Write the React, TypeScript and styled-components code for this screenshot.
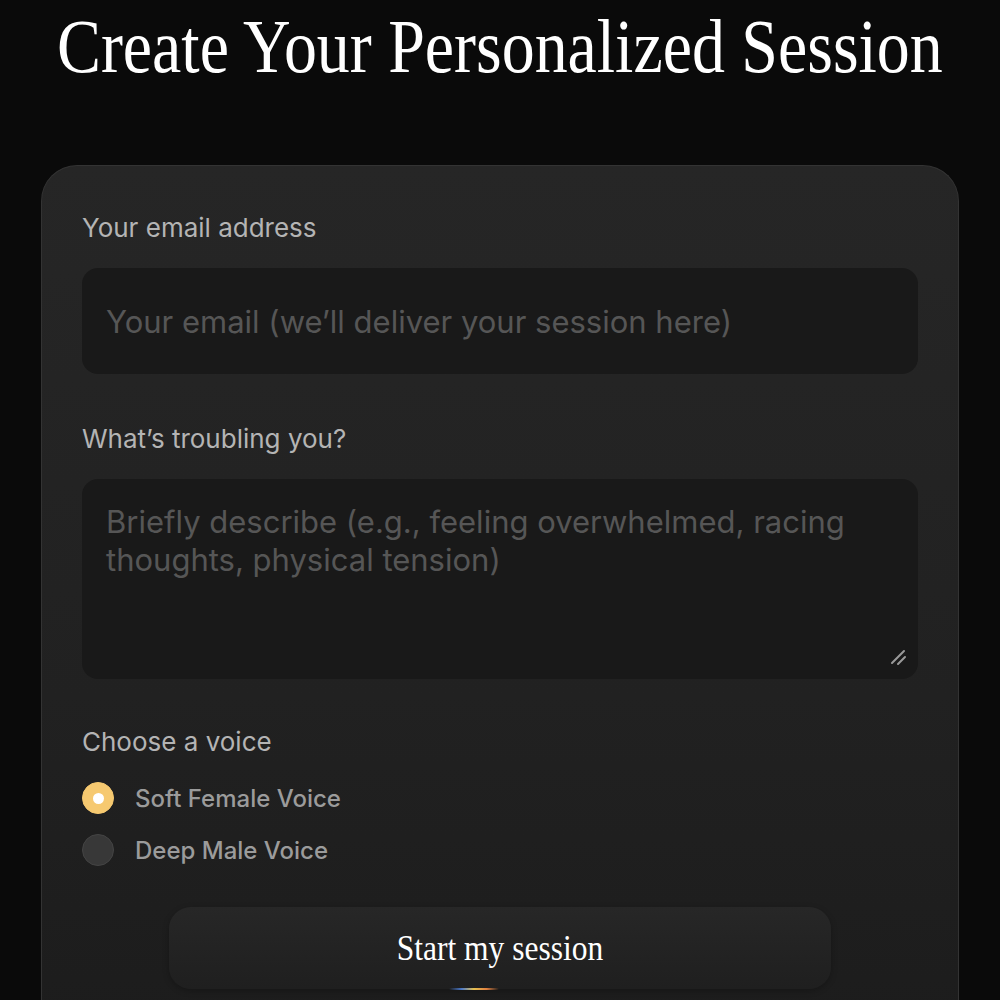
import styled, { createGlobalStyle } from "styled-components";
import { useState } from "react";

const GlobalStyle = createGlobalStyle`
  html, body {
    margin: 0;
    padding: 0;
    background: #0a0a0a;
  }
  * { box-sizing: border-box; }
`;

const Page = styled.main`
  min-height: 100vh;
  background: #0a0a0a;
  display: flex;
  flex-direction: column;
  align-items: center;
  padding: 4px 41px 40px;
  font-family: Inter, "Noto Sans", sans-serif;
`;

const Title = styled.h1`
  margin: 0;
  font-family: "Liberation Serif", serif;
  font-weight: 400;
  font-size: 76px;
  line-height: 84px;
  color: #ffffff;
  white-space: nowrap;
  transform: scaleX(0.867);
`;

const Card = styled.form`
  margin-top: 77px;
  width: 100%;
  border-radius: 36px;
  background: linear-gradient(180deg, #262626 0%, #212121 60%, #1c1c1c 100%);
  border: 1px solid #333;
  border-bottom: none;
  padding: 47px 40px 60px;
  display: flex;
  flex-direction: column;
`;

const Label = styled.label`
  font-size: 26px;
  line-height: 30px;
  color: #b4b4b4;
  margin-bottom: 25px;
`;

const fieldBase = `
  width: 100%;
  background: #191919;
  border: none;
  outline: none;
  border-radius: 16px;
  font-family: Inter, "Noto Sans", sans-serif;
  font-size: 31px;
  color: #ddd;
  &::placeholder { color: #565656; }
`;

const Input = styled.input`
  ${fieldBase}
  height: 106px;
  padding: 0 24px;
  margin-bottom: 50px;
`;

const TextArea = styled.textarea`
  ${fieldBase}
  height: 200px;
  padding: 24px 24px;
  line-height: 38px;
  resize: vertical;
  margin-bottom: 48px;
  display: block;
  &::-webkit-resizer { background: transparent; }
`;

const AreaWrap = styled.div`
  position: relative;
`;

const Grip = styled.svg`
  position: absolute;
  right: 10px;
  bottom: 60px;
  pointer-events: none;
`;

const Options = styled.div`
  display: flex;
  flex-direction: column;
  gap: 20px;
  margin-bottom: 41px;
`;

const Option = styled.label`
  display: flex;
  align-items: center;
  gap: 21px;
  cursor: pointer;
  font-size: 24px;
  font-weight: 500;
  color: #9b9b9b;
`;

const Dot = styled.span<{ $on: boolean }>`
  width: 32px;
  height: 32px;
  border-radius: 50%;
  flex-shrink: 0;
  background: ${(p) => (p.$on ? "#f6c970" : "#383838")};
  border: 1px solid ${(p) => (p.$on ? "#f6c970" : "#444")};
  display: flex;
  align-items: center;
  justify-content: center;
  &::after {
    content: "";
    width: 11px;
    height: 11px;
    border-radius: 50%;
    background: #fff;
    display: ${(p) => (p.$on ? "block" : "none")};
  }
`;

const Hidden = styled.input`
  display: none;
`;

const Button = styled.button`
  position: relative;
  align-self: center;
  width: 662px;
  height: 82px;
  border: none;
  border-radius: 22px;
  background: linear-gradient(180deg, #272727 0%, #1f1f1f 100%);
  box-shadow: 0 2px 6px rgba(0, 0, 0, 0.25);
  color: #fff;
  cursor: pointer;
  font-family: "Liberation Serif", serif;
  font-size: 36px;
  &::after {
    content: "";
    position: absolute;
    left: 280px;
    bottom: -1px;
    width: 50px;
    height: 2px;
    border-radius: 2px;
    background: linear-gradient(90deg, transparent, #4a78c8, #e5c050, #e08040, transparent);
  }
`;

const ButtonText = styled.span`
  display: inline-block;
  transform: scaleX(0.875);
`;

const voices = ["Soft Female Voice", "Deep Male Voice"];

export default function App() {
  const [voice, setVoice] = useState(voices[0]);
  return (
    <>
      <GlobalStyle />
      <Page>
        <Title>Create Your Personalized Session</Title>
        <Card onSubmit={(e) => e.preventDefault()}>
          <Label htmlFor="email">Your email address</Label>
          <Input id="email" type="email" placeholder="Your email (we’ll deliver your session here)" />
          <Label htmlFor="trouble">What’s troubling you?</Label>
          <AreaWrap>
            <TextArea
              id="trouble"
              placeholder="Briefly describe (e.g., feeling overwhelmed, racing thoughts, physical tension)"
            />
            <Grip width="20" height="20" viewBox="0 0 20 20">
              <path d="M4 16 L16 4 M10 17 L17 10" stroke="#9a9a9a" strokeWidth="2" strokeLinecap="round" />
            </Grip>
          </AreaWrap>
          <Label as="div">Choose a voice</Label>
          <Options>
            {voices.map((v) => (
              <Option key={v}>
                <Hidden type="radio" name="voice" checked={voice === v} onChange={() => setVoice(v)} />
                <Dot $on={voice === v} />
                {v}
              </Option>
            ))}
          </Options>
          <Button type="submit">
            <ButtonText>Start my session</ButtonText>
          </Button>
        </Card>
      </Page>
    </>
  );
}
